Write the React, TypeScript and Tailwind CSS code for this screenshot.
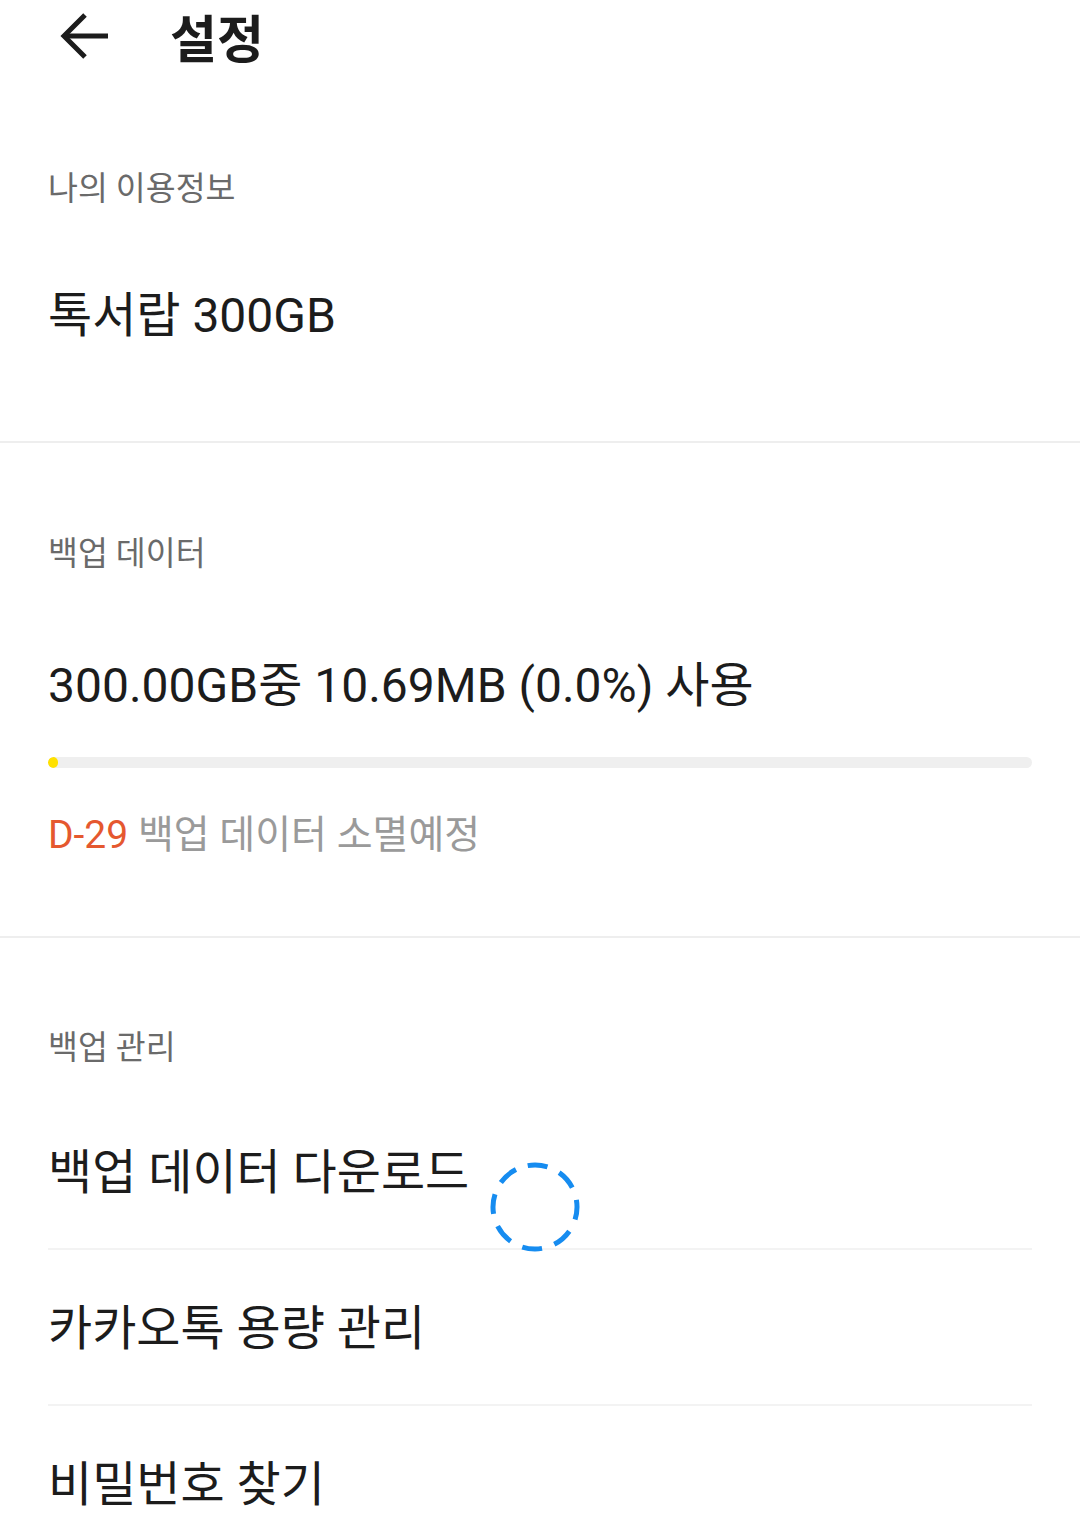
import React from 'react';

const FONT = { fontFamily: 'Roboto, "Noto Sans CJK KR", sans-serif' };

// 뒤로가기 화살표
function BackArrow() {
    return (
        <svg width="52" height="52" viewBox="0 0 52 52" fill="none" stroke="#1c1c1c" strokeWidth="5" strokeLinecap="butt">
            <path d="M50 23 H6" />
            <path d="M27 2 L6 23 L27 44" />
        </svg>
    );
}

// 로딩 스피너 (점선 원)
function Spinner() {
    return (
        <svg width="96" height="96" viewBox="0 0 96 96" fill="none">
            <circle cx="48" cy="48" r="42" stroke="#168cf0" strokeWidth="5" strokeDasharray="20 13" transform="rotate(-100 48 48)" />
        </svg>
    );
}

function SectionLabel({ children, className = '' }: { children: React.ReactNode; className?: string }) {
    return <div className={`text-[32.5px] leading-[40px] text-[#6a6a6a] ${className}`}>{children}</div>;
}

export default function App() {
    const rows = ['백업 데이터 다운로드', '카카오톡 용량 관리', '비밀번호 찾기'];

    return (
        <div className="min-h-[1531px] w-[1080px] bg-white overflow-hidden" style={FONT}>
            {/* 헤더 */}
            <div className="h-[80px] flex items-center">
                <div className="ml-[58px] mt-[-2px]">
                    <BackArrow />
                </div>
                <h1 className="ml-[60px] text-[51px] font-bold leading-none text-[#1c1c1c]">설정</h1>
            </div>

            {/* 나의 이용정보 */}
            <div className="px-[48px]">
                <SectionLabel className="mt-[89px]">나의 이용정보</SectionLabel>
                <div className="mt-[79px] text-[48px] leading-[56px] text-[#1c1c1c]">톡서랍 300GB</div>
            </div>
            <div className="mt-[97px] h-[2px] bg-[#eeeeee]" />

            {/* 백업 데이터 */}
            <div className="px-[48px]">
                <SectionLabel className="mt-[91px]">백업 데이터</SectionLabel>
                <div className="mt-[84px] text-[48px] leading-[56px] text-[#1c1c1c]">300.00GB중 10.69MB (0.0%) 사용</div>
                <div className="mt-[43px] h-[11px] rounded-full bg-[#efefef] overflow-hidden">
                    <div className="h-full w-[10px] rounded-full bg-[#ffe100]" />
                </div>
                <div className="mt-[43px] text-[39px] leading-[48px] text-[#9a9a9a]">
                    <span className="text-[#e5582f]">D-29</span> 백업 데이터 소멸예정
                </div>
            </div>
            <div className="mt-[77px] h-[2px] bg-[#eeeeee]" />

            {/* 백업 관리 */}
            <div className="px-[48px]">
                <SectionLabel className="mt-[90px]">백업 관리</SectionLabel>
                <div className="mt-[26px]">
                    {rows.map((label, i) => (
                        <div key={label}>
                            {i > 0 && <div className="h-[2px] bg-[#f3f3f3]" />}
                            <div className="relative h-[154px] pt-[4px] flex items-center text-[48px] text-[#1c1c1c]">
                                {label}
                                {i === 0 && (
                                    <div className="absolute left-[439px] top-[65px]">
                                        <Spinner />
                                    </div>
                                )}
                            </div>
                        </div>
                    ))}
                </div>
            </div>
        </div>
    );
}
